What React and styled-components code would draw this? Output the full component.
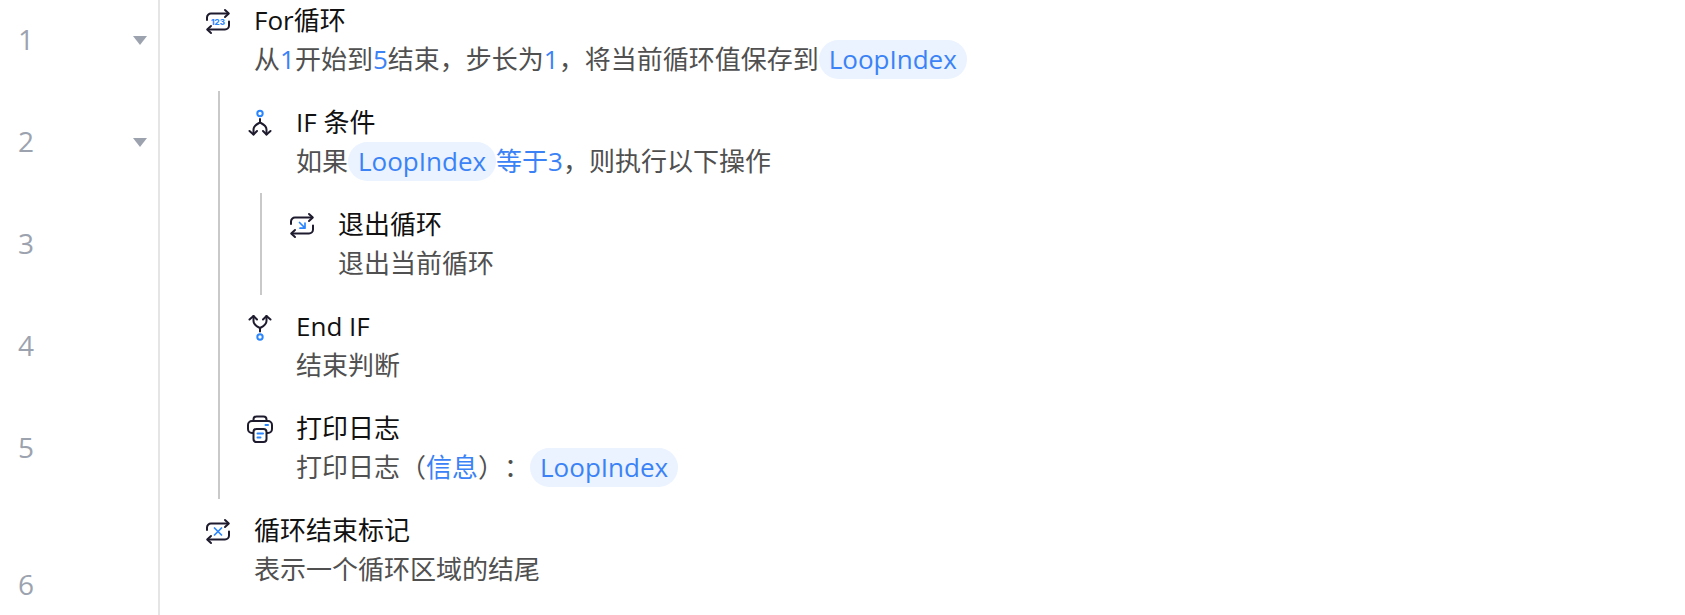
import React from 'react';
import styled, { createGlobalStyle } from 'styled-components';

const GlobalStyle = createGlobalStyle`
  * { box-sizing: border-box; }
  body {
    margin: 0;
    background: #fff;
    font-family: 'Open Sans', 'Noto Sans CJK SC', sans-serif;
    text-spacing-trim: space-all;
  }
`;

const Viewport = styled.main`
  height: 100vh;
  overflow: hidden;
`;

const Steps = styled.ol`
  list-style: none;
  margin: -11px 0 0;
  padding: 0;
`;

const Step = styled.li`
  display: flex;
  height: ${(p) => (p.$last ? 172 : 102)}px;
`;

const Gutter = styled.div`
  flex: none;
  width: 160px;
  display: flex;
  align-items: center;
  justify-content: space-between;
  padding: 0 11px 0 18px;
  border-right: 2px solid #e5e5e5;
  color: #9ca3af;
`;

const Number = styled.span`
  padding-bottom: 2px;
  font-size: 28px;
  line-height: 40px;
`;

const Toggle = styled.button`
  display: flex;
  padding: 0;
  border: 0;
  background: none;
  color: #9ca3af;
  cursor: pointer;
`;

const Body = styled.div`
  flex: 1;
  min-width: 0;
  display: flex;
  padding-left: ${(p) => (p.$nested ? 58 : 44)}px;
`;

const Guide = styled.span`
  flex: none;
  width: 2px;
  margin-right: ${(p) => (p.$inner ? 26 : 40)}px;
  background: #c9c9c9;
`;

const Command = styled.div`
  display: flex;
  gap: 20px;
  min-width: 0;
  padding: 12px 0;
  white-space: nowrap;
`;

const IconBox = styled.span`
  flex: none;
  display: flex;
  align-items: center;
  width: 30px;
  height: 39px;
`;

const Title = styled.h2`
  margin: 0;
  color: #111;
  font-size: 26px;
  font-weight: 400;
  line-height: 39px;
`;

const Summary = styled.p`
  display: flex;
  margin: 0;
  color: #505050;
  font-size: 26px;
  line-height: 39px;
`;

const Value = styled.span`
  color: #3b82f6;
`;

const Variable = styled.span`
  padding: 0 10px;
  border-radius: 20px;
  background: #eaf3ff;
  color: #3b82f6;
`;

const INK = '#1f1b2e';
const BLUE = '#2b85ff';

function Icon({ children }) {
  return (
    <svg width="30" height="30" viewBox="0 0 30 30" fill="none" stroke={INK} strokeWidth="2"
      strokeLinecap="round" strokeLinejoin="round" aria-hidden="true">
      {children}
    </svg>
  );
}

const Loop = () => (
  <>
    <path d="M3 14V11.5A4 4 0 0 1 7 7.5H24" />
    <path d="M21 4L24.8 7.5L21 11" />
    <path d="M25 15.5V19.5A4 4 0 0 1 21 23.5H4" />
    <path d="M7 20L3.2 23.5L7 27" />
  </>
);

const icons = {
  for: (
    <Icon>
      <Loop />
      <text x="14" y="18.5" textAnchor="middle" fill={BLUE} stroke="none" fontSize="8"
        fontWeight="800" fontFamily="Inter, sans-serif">123</text>
    </Icon>
  ),
  exit: (
    <Icon>
      <Loop />
      <path d="M11.5 12.5L17 18M17 13V18.2H12" stroke={BLUE} strokeWidth="1.7" />
    </Icon>
  ),
  end: (
    <Icon>
      <Loop />
      <path d="M10.5 12L17.5 19M17.5 12L10.5 19" stroke={BLUE} strokeWidth="1.7" />
    </Icon>
  ),
  branch: (
    <Icon>
      <circle cx="14" cy="5.5" r="2.7" stroke={BLUE} />
      <path d="M14 11V14.5M14 14.5C11 16 7.5 17.5 7.5 21.500V26.500M14 14.5C17 16 20.5 17.5 20.5 21.5V26.5" />
      <path d="M3.5 23L7.5 26.500L11 23M17 23L20.5 26.5L24.5 23" />
    </Icon>
  ),
  merge: (
    <Icon>
      <circle cx="14" cy="25" r="2.7" stroke={BLUE} />
      <path d="M14 19.5V16M14 16C11 14.5 7.5 13 7.5 9V4M14 16C17 14.5 20.5 13 20.5 9V4" />
      <path d="M3.5 7.5L7.5 4L11 7.5M17 7.5L20.5 4L24.5 7.5" />
    </Icon>
  ),
  print: (
    <Icon>
      <path d="M7.5 7V5.5A3 3 0 0 1 10.5 2.5H17.5A3 3 0 0 1 20.5 5.5V7" />
      <path d="M7 19H6A4 4 0 0 1 2 15V11A4 4 0 0 1 6 7H22A4 4 0 0 1 26 11V15A4 4 0 0 1 22 19H21" />
      <rect x="7.5" y="15" width="13" height="13" rx="3" />
      <path d="M19.5 11H22M11.5 19.5H17M11.5 23.5H14.5" stroke={BLUE} />
    </Icon>
  ),
};

const steps = [
  {
    icon: 'for', title: 'For循环', depth: 0, foldable: true,
    summary: <>从<Value>1</Value>开始到<Value>5</Value>结束，步长为<Value>1</Value>，将当前循环值保存到<Variable>LoopIndex</Variable></>,
  },
  {
    icon: 'branch', title: 'IF 条件', depth: 1, foldable: true,
    summary: <>如果<Variable>LoopIndex</Variable><Value>等于3</Value>，则执行以下操作</>,
  },
  { icon: 'exit', title: '退出循环', depth: 2, summary: '退出当前循环' },
  { icon: 'merge', title: 'End IF', depth: 1, summary: '结束判断' },
  {
    icon: 'print', title: '打印日志', depth: 1,
    summary: <>打印日志（<Value>信息</Value>）：<Variable>LoopIndex</Variable></>,
  },
  { icon: 'end', title: '循环结束标记', depth: 0, summary: '表示一个循环区域的结尾' },
];

export default function App() {
  return (
    <>
      <GlobalStyle />
      <Viewport>
        <Steps>
          {steps.map((step, i) => (
            <Step key={step.title} $last={i === steps.length - 1}>
              <Gutter>
                <Number>{i + 1}</Number>
                {step.foldable && (
                  <Toggle aria-label={`折叠 ${step.title}`}>
                    <svg width="14" height="9" viewBox="0 0 14 9" aria-hidden="true">
                      <path d="M0 0H14L7 9Z" fill="currentColor" />
                    </svg>
                  </Toggle>
                )}
              </Gutter>
              <Body $nested={step.depth > 0}>
                {Array.from({ length: step.depth }, (_, level) => (
                  <Guide key={level} $inner={level === step.depth - 1} />
                ))}
                <Command>
                  <IconBox>{icons[step.icon]}</IconBox>
                  <div>
                    <Title>{step.title}</Title>
                    <Summary>{step.summary}</Summary>
                  </div>
                </Command>
              </Body>
            </Step>
          ))}
        </Steps>
      </Viewport>
    </>
  );
}
